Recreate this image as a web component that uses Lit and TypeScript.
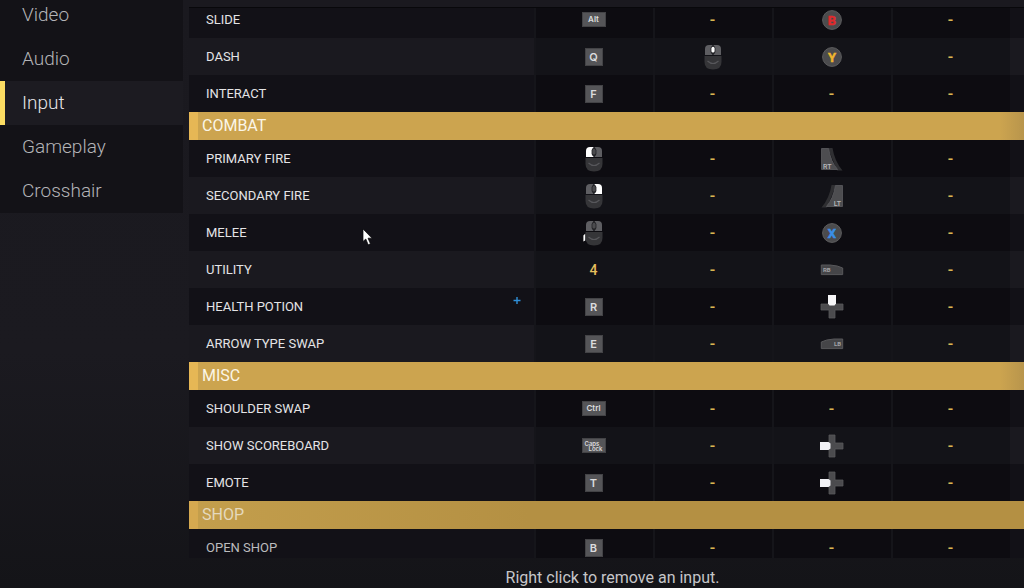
import { LitElement, html, svg, css, nothing } from "lit";
import { customElement, state } from "lit/decorators.js";
import { classMap } from "lit/directives/class-map.js";

type Binding = string;
interface Action { name: string; binds: [Binding, Binding, Binding, Binding]; }
interface Group { title: string; dim?: boolean; actions: Action[]; }

const NONE = "-";

const GROUPS: Group[] = [
  {
    title: "",
    actions: [
      { name: "SLIDE", binds: ["key:Alt", NONE, "face:B", NONE] },
      { name: "DASH", binds: ["key:Q", "mouse:middle", "face:Y", NONE] },
      { name: "INTERACT", binds: ["key:F", NONE, NONE, NONE] },
    ],
  },
  {
    title: "COMBAT",
    actions: [
      { name: "PRIMARY FIRE", binds: ["mouse:left", NONE, "trigger:RT", NONE] },
      { name: "SECONDARY FIRE", binds: ["mouse:right", NONE, "trigger:LT", NONE] },
      { name: "MELEE", binds: ["mouse:side", NONE, "face:X", NONE] },
      { name: "UTILITY", binds: ["4", NONE, "bumper:RB", NONE] },
      { name: "HEALTH POTION", binds: ["key:R", NONE, "dpad:up", NONE] },
      { name: "ARROW TYPE SWAP", binds: ["key:E", NONE, "bumper:LB", NONE] },
    ],
  },
  {
    title: "MISC",
    actions: [
      { name: "SHOULDER SWAP", binds: ["key:Ctrl", NONE, NONE, NONE] },
      { name: "SHOW SCOREBOARD", binds: ["key:Caps Lock", NONE, "dpad:left", NONE] },
      { name: "EMOTE", binds: ["key:T", NONE, "dpad:left", NONE] },
    ],
  },
  {
    title: "SHOP",
    dim: true,
    actions: [{ name: "OPEN SHOP", binds: ["key:B", NONE, NONE, NONE] }],
  },
];

@customElement("binding-glyph")
class BindingGlyph extends LitElement {
  static properties = { value: {} };
  declare value: string;

  static styles = css`
    :host { display: inline-flex; align-items: center; justify-content: center; }
    svg { display: block; }
    .plain { font: 500 16px/18px Roboto, sans-serif; color: #d8b652; }
    .number { font: 500 14px/18px Roboto, sans-serif; color: #e6bf5c; }
    .key {
      box-sizing: border-box;
      width: 18px;
      height: 18px;
      display: flex;
      align-items: center;
      justify-content: center;
      background: #555558;
      border: 1px solid #434346;
      color: #dcdcde;
      font: 600 11px/16px Inter, sans-serif;
    }
    .wide { width: 24px; height: 15px; font-size: 8px; line-height: 13px; }
    .caps {
      font-size: 6px;
      line-height: 5px;
      flex-direction: column;
    }
    .caps .first { align-self: flex-start; padding-left: 2px; }
    .caps .second { align-self: flex-end; padding-right: 2px; }
    .facetext { font: 700 13px Roboto, sans-serif; }
    .small { font: 500 7px Roboto, sans-serif; fill: #b9b9bc; }
    .tiny { font: 700 6px Roboto, sans-serif; fill: #a2a2a5; }
  `;

  private key(label: string) {
    if (label === "Caps Lock") {
      return html`<span class="key wide caps"><span class="first">Caps</span><span class="second">Lock</span></span>`;
    }
    return html`<span class=${classMap({ key: true, wide: label.length > 1 })}>${label}</span>`;
  }

  private mouse(part: string) {
    const fill = (p: string) => (p === part ? "#fff" : "#5e5e62");
    return html`<svg width="24" height="26" viewBox="0 0 24 26" aria-hidden="true">
      <path d="M4 11V5Q4 1 8 1H11.4V11Z" fill=${fill("left")} />
      <path d="M12.6 11V1H16Q20 1 20 5V11Z" fill=${fill("right")} />
      <path d="M3.5 12H20.5V18Q20.5 25.5 12 25.5T3.5 18Z" fill="#353538" />
      <path d="M6.5 17Q12 22 17.5 17" fill="none" stroke="#57575b" stroke-width="1.1" />
      <rect x="9.6" y="2" width="4.8" height="8.2" rx="2.4" fill="#222226" />
      <rect x="10.4" y="2.8" width="3.2" height="5.8" rx="1.6" fill=${part === "middle" ? "#fff" : "#4b4b4e"} />
      ${part === "side" ? svg`<path d="M1.4 15.5L3.2 13.8V20.5L1.4 21.5Z" fill="#fff" />` : nothing}
    </svg>`;
  }

  private face(letter: string) {
    const colour = letter === "B" ? "#e02a2c" : letter === "Y" ? "#eeb52e" : "#3a8fe6";
    return html`<svg width="22" height="22" viewBox="0 0 22 22" aria-hidden="true">
      <circle cx="11" cy="11" r="9.4" fill="#4b4b4d" stroke="#5c5c5e" stroke-width="1" />
      <text class="facetext" x="11" y="15.6" text-anchor="middle" fill=${colour} stroke=${colour} stroke-width="0.5">${letter}</text>
    </svg>`;
  }

  private trigger(label: string) {
    const right = label === "RT";
    return html`<svg width="24" height="24" viewBox="0 0 24 24" aria-hidden="true">
      <g transform=${right ? "" : "translate(24 0) scale(-1 1)"}>
        <path d="M8 1H12.5Q14.5 14 22.5 23.5H17Z" fill="#2f2f32" />
        <path d="M1.5 1.5H8.5Q11 15 17.5 22.5H1.5Z" fill="#4d4d50" stroke="#5c5c5f" stroke-width="0.8" />
      </g>
      <text class="small" x=${right ? 3 : 21} y="21.5" text-anchor=${right ? "start" : "end"}>${label}</text>
    </svg>`;
  }

  private bumper(label: string) {
    const right = label === "RB";
    return html`<svg width="24" height="12" viewBox="0 0 24 12" aria-hidden="true">
      <path transform=${right ? "" : "translate(24 0) scale(-1 1)"}
        d="M1.3 1H10Q18 1.5 22.7 4V10.6H1.3Z" fill="#454548" stroke="#58585b" stroke-width="1" />
      <text class="tiny" x=${right ? 3 : 21} y="8" text-anchor=${right ? "start" : "end"}>${label}</text>
    </svg>`;
  }

  private dpad(direction: string) {
    return html`<svg width="26" height="26" viewBox="0 0 26 26" aria-hidden="true">
      <path d="M10 2H16V10H24V16H16V24H10V16H2V10H10Z" fill="#4b4b4e" stroke="#58585b" stroke-width="0.8" />
      ${direction === "up"
        ? svg`<path d="M9 1H17V9.5L15.5 11.5H10.5L9 9.5Z" fill="#f6f6f8" />`
        : svg`<path d="M1 9H9.5L11.5 10.5V15.5L9.5 17H1Z" fill="#f1f1f5" />`}
    </svg>`;
  }

  render() {
    const [kind, arg] = (this.value ?? NONE).split(":");
    switch (kind) {
      case "key": return this.key(arg);
      case "mouse": return this.mouse(arg);
      case "face": return this.face(arg);
      case "trigger": return this.trigger(arg);
      case "bumper": return this.bumper(arg);
      case "dpad": return this.dpad(arg);
      case NONE: return html`<span class="plain">-</span>`;
      default: return html`<span class="number">${kind}</span>`;
    }
  }
}

@customElement("app-root")
class AppRoot extends LitElement {
  @state() private section = "Input";

  static styles = css`
    :host {
      display: grid;
      grid-template-columns: 183px minmax(0, 1fr);
      column-gap: 6px;
      height: 100vh;
      overflow: hidden;
      position: relative;
      background: linear-gradient(#1a191f, #1b1a20 60%, #141418);
      font-family: Roboto, sans-serif;
      color: #e4e4e6;
    }
    button {
      appearance: none;
      border: 0;
      margin: 0;
      padding: 0;
      background: none;
      font: inherit;
      color: inherit;
      cursor: pointer;
    }
    nav {
      align-self: start;
      margin-top: -7px;
      display: flex;
      flex-direction: column;
      background: #131217;
    }
    .tab {
      height: 44px;
      padding-left: 17px;
      border-left: 5px solid transparent;
      text-align: left;
      font-weight: 300;
      font-size: 19px;
      line-height: 44px;
      color: #b4b4b7;
    }
    .active {
      color: #e6e6e8;
      border-left-color: #fbdc62;
      background: #1c1b21;
    }
    main {
      display: grid;
      grid-template-rows: minmax(0, 1fr) 30px;
      padding-top: 7px;
      min-height: 0;
    }
    .scroller {
      overflow-y: auto;
      scrollbar-width: none;
      border-top: 1px solid #08080b;
    }
    table {
      width: 100%;
      table-layout: fixed;
      border-collapse: separate;
      border-spacing: 0;
    }
    .slot { width: 119px; }
    .gutter { width: 14px; }
    td, th { padding: 0; }
    .row { height: 37px; background: #121117; }
    .row:nth-child(even) { background: #1a191f; }
    .titled .row { background: #1a191f; }
    .titled .row:nth-child(even) { background: #121117; }
    .name {
      padding-left: 17px;
      text-align: left;
      font-weight: 400;
      font-size: 13px;
      line-height: 18px;
      white-space: nowrap;
    }
    .cell {
      background: #0d0c11;
      box-shadow: inset 2px 0 #15151a;
    }
    .row:nth-child(even) .cell { background: #131318; }
    .titled .cell { background: #131318; }
    .titled .row:nth-child(even) .cell { background: #0d0c11; }
    .bind {
      display: flex;
      align-items: center;
      justify-content: center;
      width: 100%;
      height: 37px;
    }
    .title {
      height: 28px;
      box-sizing: border-box;
      background: linear-gradient(90deg, transparent calc(100% - 24px), #b8954c), #cca44f;
      border-left: 9px solid #e6b755;
      padding-left: 4px;
      text-align: left;
      font-weight: 400;
      font-size: 16px;
      line-height: 26px;
      color: #fbf6e8;
    }
    .dim .title { background: linear-gradient(90deg, #c39e4c, #b49043 40%, #b49043); border-left-color: #d5a950; color: #e5d9bd; }
    .dim .name { color: #bcbcbe; }
    footer {
      padding: 10px 0 0 12px;
      text-align: center;
      font-size: 16px;
      line-height: 20px;
      color: #c6c6c9;
    }
    .pointer { position: absolute; left: 362px; top: 228px; pointer-events: none; }
    .reticle { position: absolute; left: 513px; top: 296px; pointer-events: none; }
  `;

  firstUpdated() {
    const scroller = this.renderRoot.querySelector(".scroller");
    if (scroller) scroller.scrollTop = 7;
  }

  private renderAction(action: Action) {
    return html`<tr class="row">
      <th class="name" scope="row">${action.name}</th>
      ${action.binds.map((b, i) => html`<td class="cell">
        <button class="bind" aria-label=${`${action.name} input ${i + 1}`}>
          <binding-glyph .value=${b}></binding-glyph>
        </button>
      </td>`)}
      <td></td>
    </tr>`;
  }

  render() {
    return html`
      <nav>
        ${["Video", "Audio", "Input", "Gameplay", "Crosshair"].map((s) => html`<button
          class=${classMap({ tab: true, active: s === this.section })}
          @click=${() => (this.section = s)}>${s}</button>`)}
      </nav>
      <main>
        <div class="scroller">
          <table>
            <colgroup>
              <col />
              <col class="slot" /><col class="slot" /><col class="slot" /><col class="slot" />
              <col class="gutter" />
            </colgroup>
            ${GROUPS.map((g) => html`<tbody class=${classMap({ titled: !!g.title, dim: !!g.dim })}>
              ${g.title ? html`<tr><th class="title" colspan="6" scope="rowgroup">${g.title}</th></tr>` : nothing}
              ${g.actions.map((a) => this.renderAction(a))}
            </tbody>`)}
          </table>
        </div>
        <footer>Right click to remove an input.</footer>
      </main>
      <svg class="reticle" width="8" height="8" viewBox="0 0 8 8" aria-hidden="true">
        <path d="M4 1V8M0.5 4.5H7.5" stroke="#2f8fd8" stroke-width="1.4" />
      </svg>
      <svg class="pointer" width="12" height="18" viewBox="0 0 12 18" aria-hidden="true">
        <path d="M1 1V13.5L3.8 11L6.2 16.8L8.4 15.8L6 10.2H10Z" fill="#fff" stroke="#0a0a0c" stroke-width="0.7" />
      </svg>
    `;
  }
}
